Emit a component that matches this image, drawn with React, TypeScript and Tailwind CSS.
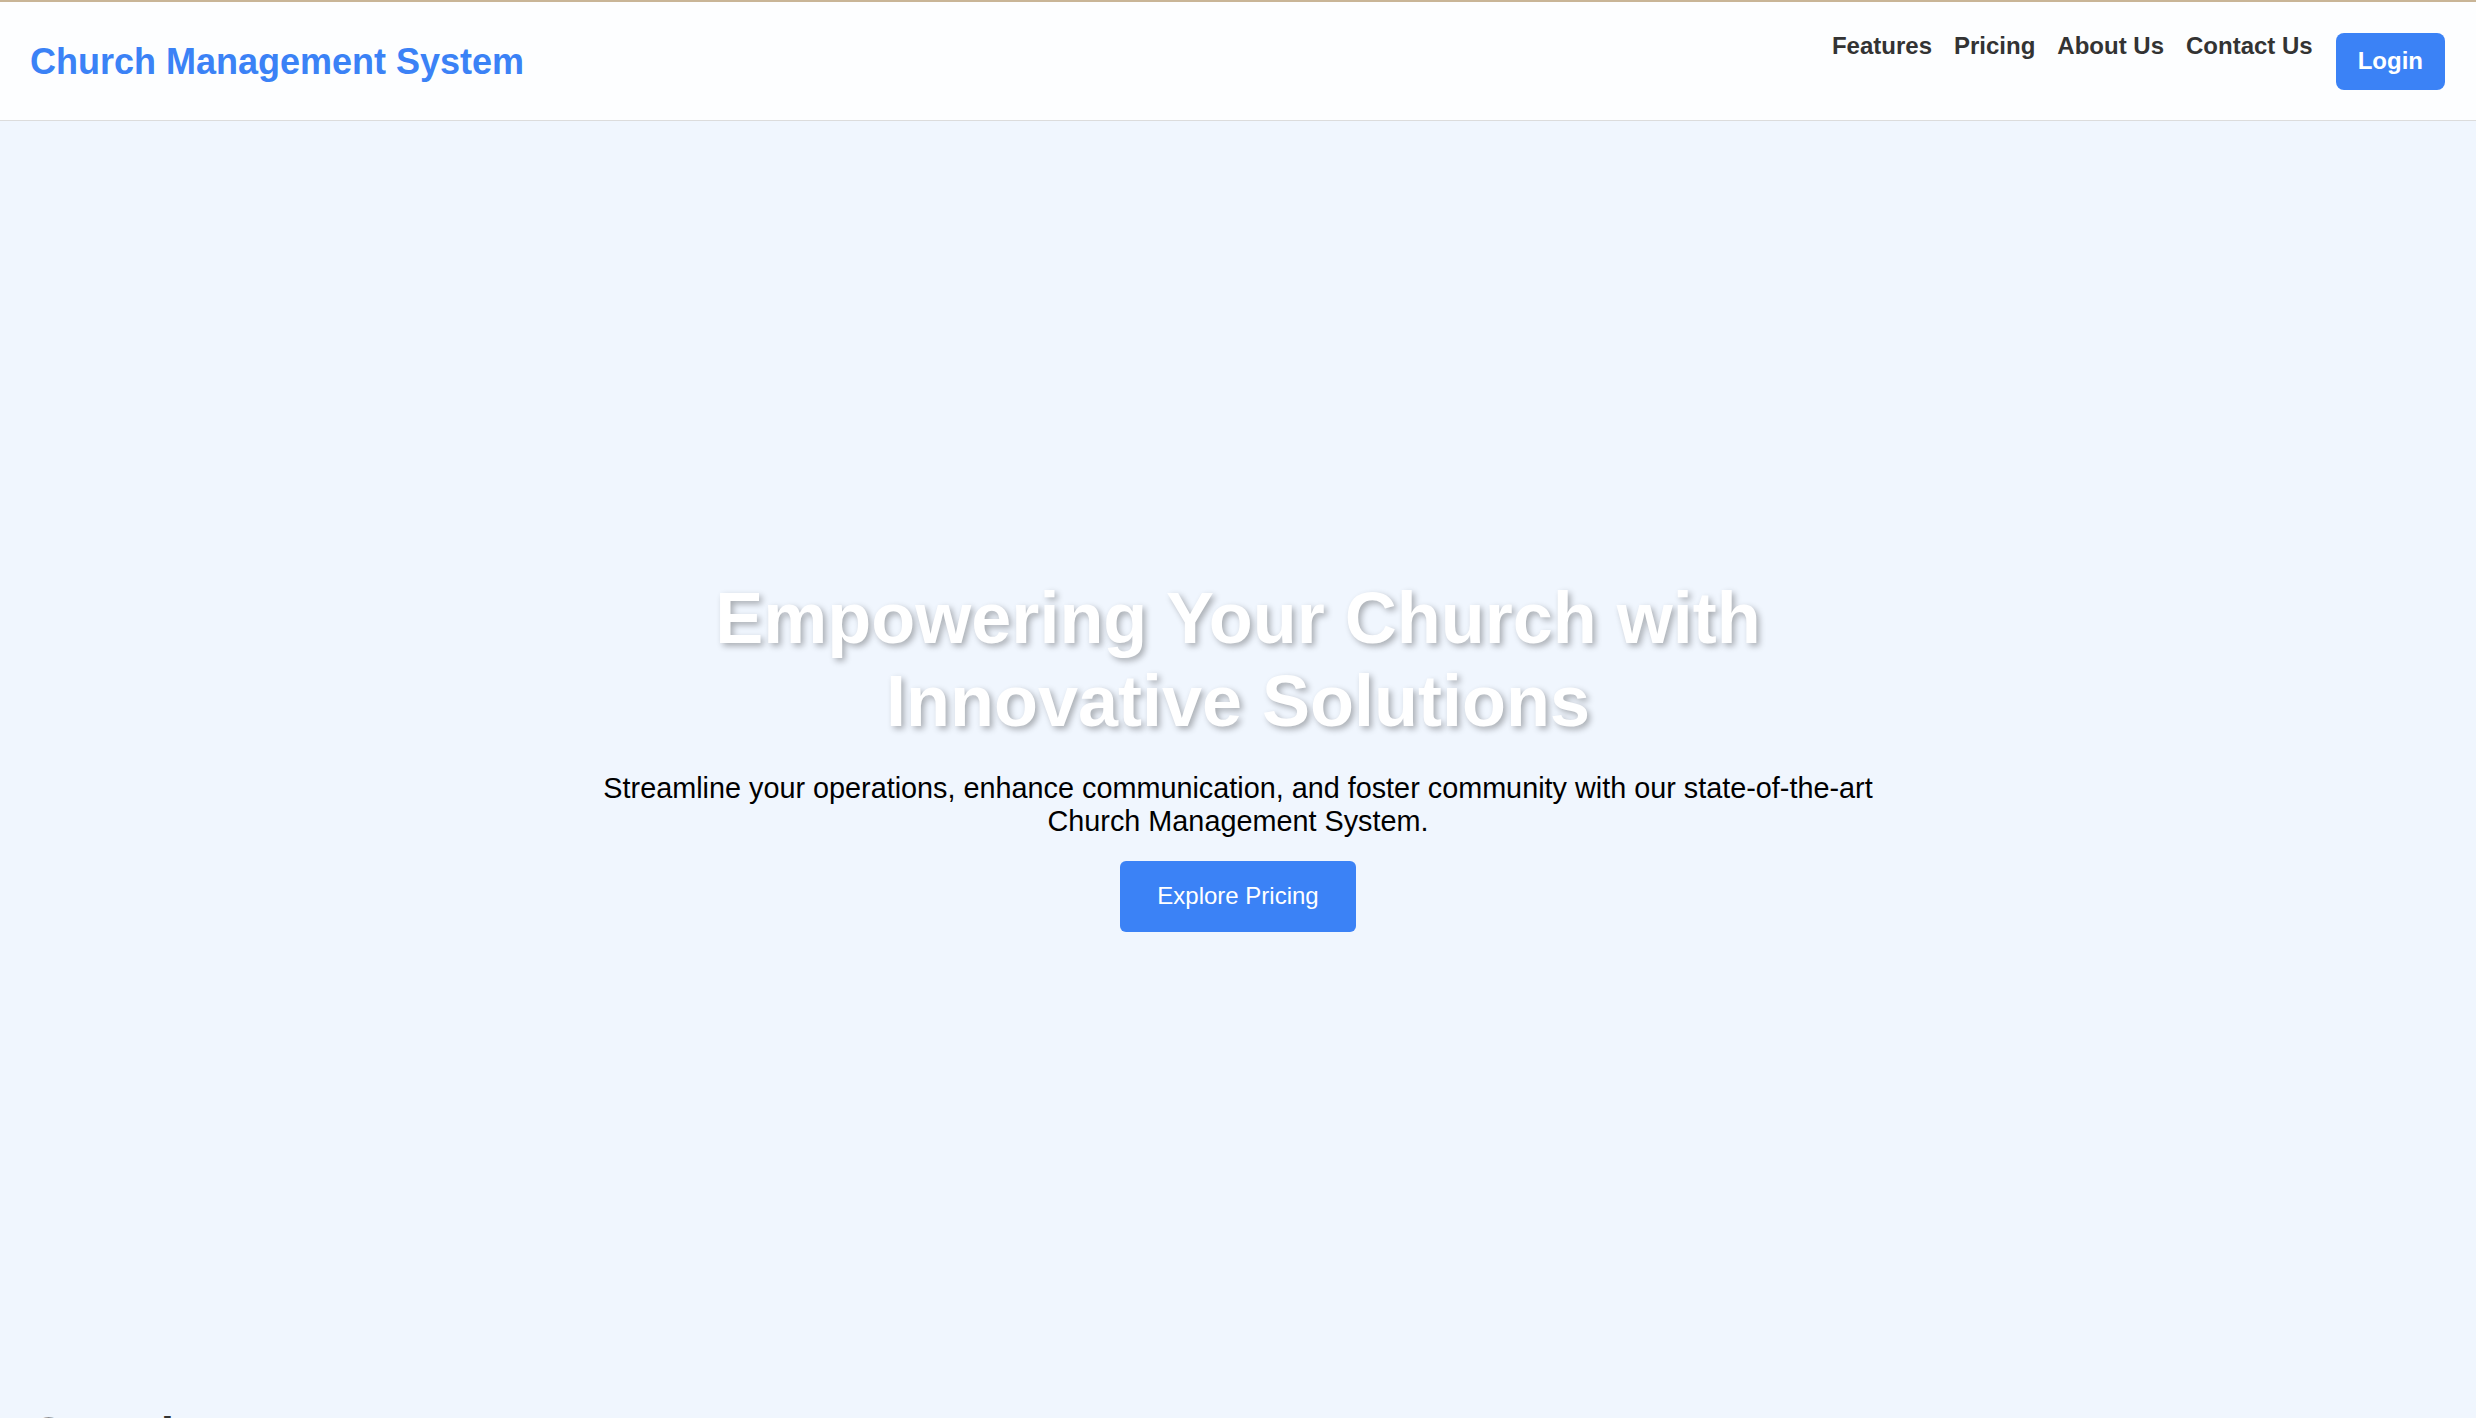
export default function App() {
  return (
    <div className="min-h-screen bg-[#f0f6fe] font-['Liberation_Sans',Arial,sans-serif]">
      {/* Header */}
      <header className="flex h-[121px] items-center justify-between border-t-2 border-b border-t-[#c9b597] border-b-[#dcdcdc] bg-[#fdfeff] pl-[30px] pr-[31px]">
        <div className="text-[36px] font-bold leading-[41px] text-[#3b82f6]">Church Management System</div>
        <div className="flex items-center gap-[23px]">
          <nav className="mb-[30px] flex gap-[22px] text-[24px] font-bold leading-[36px] text-[#333]">
            <a href="#features">Features</a>
            <a href="#pricing">Pricing</a>
            <a href="#about">About Us</a>
            <a href="#contact">Contact Us</a>
          </nav>
          <button className="flex h-[57px] items-center rounded-[8px] bg-[#3b82f6] px-[22px] text-[24px] font-bold text-white">
            Login
          </button>
        </div>
      </header>

      {/* Hero */}
      <section className="flex h-[1266px] flex-col items-center justify-center text-center">
        <div className="flex w-[1350px] flex-col items-center">
          <h1 className="text-[72px] font-bold leading-[83px] text-white [text-shadow:3px_3px_6px_rgba(0,0,0,0.3)]">
            Empowering Your Church with Innovative Solutions
          </h1>
          <p className="mt-[29px] text-[28.8px] leading-[33px] text-black">
            Streamline your operations, enhance communication, and foster community with our state-of-the-art Church Management System.
          </p>
          <button className="mt-[23px] h-[71px] rounded-[6px] bg-[#3b82f6] px-[37px] text-[24px] text-white">
            Explore Pricing
          </button>
        </div>
      </section>

      {/* Next section */}
      <section className="pl-[30px] pt-[20px]">
        <h2 className="text-[48px] font-bold leading-[55px] text-[#333]">Our Plans</h2>
      </section>
    </div>
  );
}
